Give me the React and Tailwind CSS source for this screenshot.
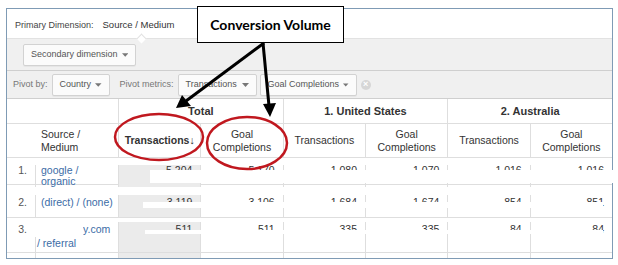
import React from 'react';

const grid = 'grid grid-cols-[28px_83px_repeat(6,minmax(0,1fr))]';
const line = 'border-l border-[#dedede]';

const Caret = () => (
  <svg width="7" height="4" viewBox="0 0 7 4" className="ml-auto">
    <path d="M0 0h7L3.5 4z" fill="#777" />
  </svg>
);

const Btn = ({ w, children }) => (
  <div
    className={`${w} h-[22px] flex items-center gap-1 px-[7px] bg-[#fbfbfb] border border-[#d2d2d2] rounded-[2px] text-[#555] text-[9px] shadow-[0_1px_0_rgba(0,0,0,0.04)]`}
  >
    <span className="whitespace-nowrap">{children}</span>
    <Caret />
  </div>
);

const rows = [
  { n: '1.', src: ['google /', 'organic'], vals: ['5,204', '5,170', '1,080', '1,070', '1,016', '1,016'], h: 'h-[27px]', pad: 'pt-[7px] leading-[11px]' },
  { n: '2.', src: ['(direct) / (none)'], vals: ['3,119', '3,106', '1,684', '1,674', '854', '851'], h: 'h-[33px]', pad: 'pt-[10px] leading-[14px]' },
  { n: '3.', src: ['y.com', '/ referral'], vals: ['511', '511', '335', '335', '84', '84'], h: 'h-[35px]', pad: 'pt-[4px] leading-[14px]' },
];

export default function App() {
  return (
    <div className="relative w-[618px] h-[265px] bg-white overflow-hidden font-['Liberation_Sans',Arial,sans-serif] pt-[8px] pl-[6px]">
      <div className="w-[607px] h-[251px] border border-[#7f9bb5] flex flex-col">
        {/* primary dimension */}
        <div className="relative h-[30px] shrink-0 border-b border-[#e2e2e2] flex items-center pt-[4px] pl-[8px] text-[9px] text-[#444]">
          <span>Primary Dimension:</span>
          <span className="ml-[9px] text-[9.5px] text-[#333]">Source / Medium</span>
          <div className="absolute left-[131px] bottom-[-4px] w-[7px] h-[7px] rotate-45 bg-white border-l border-t border-[#e2e2e2]" />
        </div>
        {/* secondary dimension */}
        <div className="h-[32px] shrink-0 bg-[#f0f0f0] border-b border-[#cfcfcf] flex items-center pl-[16px]">
          <Btn w="w-[113px]">Secondary dimension</Btn>
        </div>
        {/* pivot */}
        <div className="h-[28px] shrink-0 bg-[#f0f0f0] border-b border-[#cfcfcf] flex items-center pl-[6px] text-[9px] text-[#777]">
          <span>Pivot by:</span>
          <div className="ml-[4px]">
            <Btn w="w-[58px]">Country</Btn>
          </div>
          <span className="ml-[10px]">Pivot metrics:</span>
          <div className="ml-[4px]">
            <Btn w="w-[79px]">Transactions</Btn>
          </div>
          <div className="ml-[3px]">
            <Btn w="w-[97px]">Goal Completions</Btn>
          </div>
          <div className="ml-[4px] w-[10px] h-[10px] rounded-full bg-[#d6d6d6] flex items-center justify-center text-white text-[9px] leading-none font-bold">×</div>
        </div>

        {/* header row 1 */}
        <div className={`${grid} h-[25px] shrink-0 border-b border-[#dedede] text-[11px] font-bold text-[#333]`}>
          <div className="col-span-2" />
          <div className={`col-span-2 ${line} flex items-center justify-center`}>Total</div>
          <div className={`col-span-2 ${line} flex items-center justify-center`}>1. United States</div>
          <div className={`col-span-2 ${line} flex items-center justify-center`}>2. Australia</div>
        </div>
        {/* header row 2 */}
        <div className={`${grid} h-[34px] shrink-0 border-b border-[#dedede] text-[10.5px] leading-[13px] text-[#333]`}>
          <div className="col-span-2 flex items-center pl-[34px]">Source /<br />Medium</div>
          <div className={`${line} flex items-center justify-center font-bold`}>Transactions↓</div>
          <div className={`${line} flex items-center justify-center text-center`}>Goal<br />Completions</div>
          <div className={`${line} flex items-center justify-center`}>Transactions</div>
          <div className={`${line} flex items-center justify-center text-center`}>Goal<br />Completions</div>
          <div className={`${line} flex items-center justify-center`}>Transactions</div>
          <div className={`${line} flex items-center justify-center text-center`}>Goal<br />Completions</div>
        </div>

        {/* data rows */}
        {rows.map((r) => (
          <div key={r.n} className={`${grid} ${r.h} shrink-0 border-b border-[#dedede] text-[10.5px] ${r.pad}`}>
            <div className="text-right pr-[8px] text-[#555] -mt-[inherit]">{r.n}</div>
            <div className={`${line} pl-[5px] text-[#3b6ca6] ${r.n === '3.' ? 'pl-[47px]' : ''}`}>
              {r.src.map((s, i) => (
                <div key={s} className={r.n === '3.' && i === 1 ? '-ml-[46px]' : ''}>{s}</div>
              ))}
            </div>
            {r.vals.map((v, i) => (
              <div key={i} className={`${line} text-right pr-[8px] text-[#333] ${i === 0 ? 'bg-[#ebebeb]' : ''}`}>{v}</div>
            ))}
          </div>
        ))}
        <div className={`${grid} flex-1`}>
          <div />
          <div className={line} />
          <div className={`${line} bg-[#ebebeb]`} />
          <div className={line} />
          <div className={line} />
          <div className={line} />
          <div className={line} />
          <div className={line} />
        </div>
      </div>

      {/* redaction patches */}
      <div className="absolute left-[150px] top-[170px] w-[463px] h-[13px] bg-white" />
      <div className="absolute left-[143px] top-[202px] w-[460px] h-[6px] bg-white" />
      <div className="absolute left-[145px] top-[230px] w-[458px] h-[4px] bg-white" />
      <div className="absolute left-[30px] top-[222px] w-[53px] h-[15px] bg-white" />

      {/* annotation */}
      <div className="absolute left-[197px] top-[6px] w-[147px] h-[37px] bg-white border-[1.5px] border-black flex items-center justify-center font-['Lato',sans-serif] font-bold text-[14px] text-black">
        Conversion Volume
      </div>
      <svg className="absolute inset-0 pointer-events-none" width="618" height="265" viewBox="0 0 618 265">
        <ellipse cx="159" cy="137" rx="44" ry="23" fill="none" stroke="#c0181f" strokeWidth="2.5" />
        <ellipse cx="247" cy="143" rx="40" ry="26" fill="none" stroke="#c0181f" strokeWidth="2.5" />
        <line x1="264" y1="43" x2="186" y2="101" stroke="#000" strokeWidth="3" />
        <path d="M176 108 L182 95 L191 106 Z" fill="#000" />
        <line x1="263" y1="43" x2="269" y2="106" stroke="#000" strokeWidth="3" />
        <path d="M270 117 L263 104 L276 103 Z" fill="#000" />
      </svg>
    </div>
  );
}
